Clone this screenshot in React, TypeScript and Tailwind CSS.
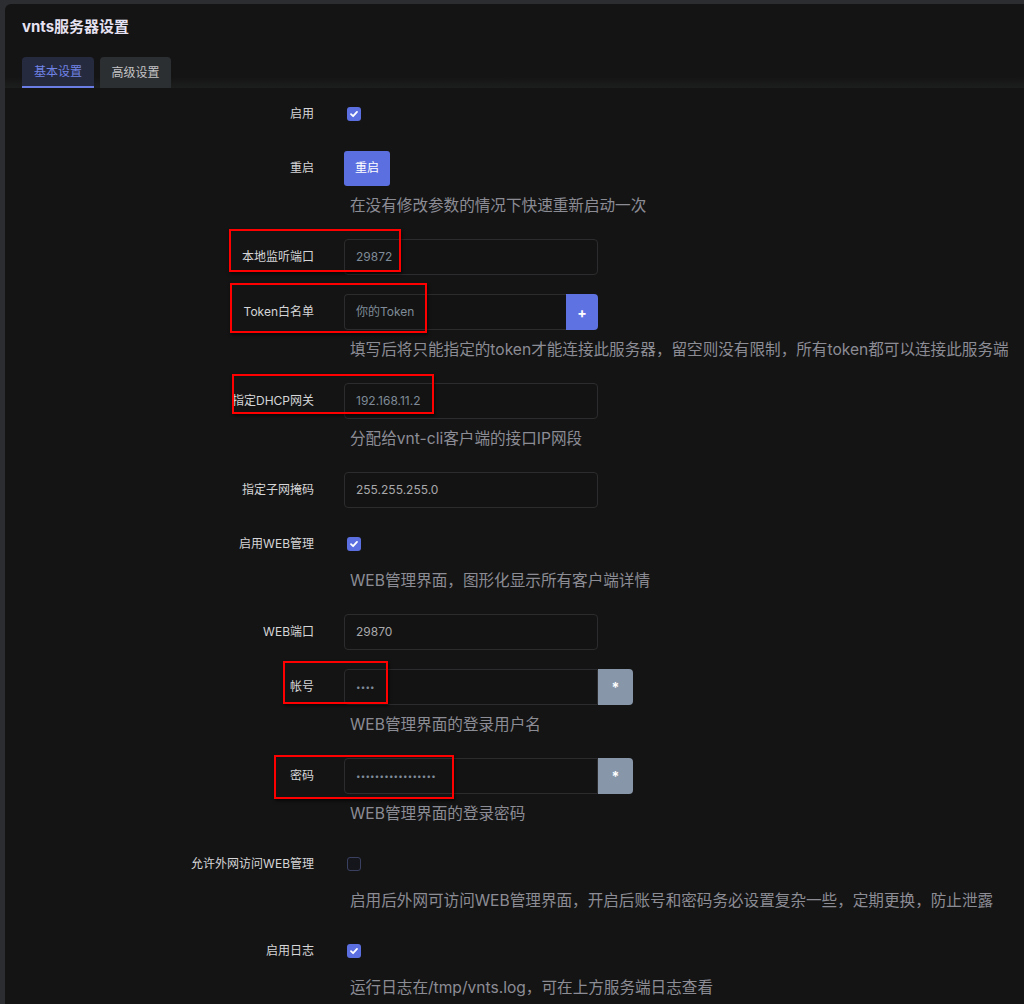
import React from 'react';

type Row = {
  label: string;
  kind: 'check' | 'button' | 'input' | 'inputAdd' | 'inputStar';
  value?: string;
  dim?: boolean;
  checked?: boolean;
  help?: string;
};

const rows: Row[] = [
  { label: '启用', kind: 'check', checked: true },
  { label: '重启', kind: 'button', help: '在没有修改参数的情况下快速重新启动一次' },
  { label: '本地监听端口', kind: 'input', value: '29872', dim: true },
  {
    label: 'Token白名单',
    kind: 'inputAdd',
    value: '你的Token',
    dim: true,
    help: '填写后将只能指定的token才能连接此服务器，留空则没有限制，所有token都可以连接此服务端',
  },
  { label: '指定DHCP网关', kind: 'input', value: '192.168.11.2', dim: true, help: '分配给vnt-cli客户端的接口IP网段' },
  { label: '指定子网掩码', kind: 'input', value: '255.255.255.0' },
  { label: '启用WEB管理', kind: 'check', checked: true, help: 'WEB管理界面，图形化显示所有客户端详情' },
  { label: 'WEB端口', kind: 'input', value: '29870' },
  { label: '帐号', kind: 'inputStar', value: '••••', dim: true, help: 'WEB管理界面的登录用户名' },
  { label: '密码', kind: 'inputStar', value: '•••••••••••••••••', dim: true, help: 'WEB管理界面的登录密码' },
  {
    label: '允许外网访问WEB管理',
    kind: 'check',
    checked: false,
    help: '启用后外网可访问WEB管理界面，开启后账号和密码务必设置复杂一些，定期更换，防止泄露',
  },
  { label: '启用日志', kind: 'check', checked: true, help: '运行日志在/tmp/vnts.log，可在上方服务端日志查看' },
];

// red annotation boxes drawn over the screenshot
const marks = [
  { l: 229, t: 229, w: 172, h: 43 },
  { l: 230, t: 283, w: 197, h: 50 },
  { l: 232, t: 374, w: 202, h: 40 },
  { l: 283, t: 661, w: 105, h: 43 },
  { l: 274, t: 755, w: 180, h: 44 },
];

function Checkbox({ checked }: { checked?: boolean }) {
  if (!checked) {
    return <span className="block w-[14px] h-[14px] rounded-[3px] border border-[#3a4160] bg-[#15161c]" />;
  }
  return (
    <span className="flex w-[14px] h-[14px] rounded-[3px] bg-[#5c6fe0] items-center justify-center">
      <svg width="10" height="10" viewBox="0 0 10 10">
        <path d="M2 5.2 L4.1 7.2 L8 2.9" fill="none" stroke="#fff" strokeWidth="1.8" strokeLinecap="round" strokeLinejoin="round" />
      </svg>
    </span>
  );
}

function TextBox({ value, dim, secret, className }: { value?: string; dim?: boolean; secret?: boolean; className: string }) {
  return (
    <div
      className={`h-[36px] border border-[#2c2c2e] bg-[#131313] flex items-center px-[11px] ${
        secret ? 'text-[8px] tracking-[0.2px]' : 'text-[12px]'
      } ${dim ? 'text-[#7f8b98]' : 'text-[#a9a9ab]'} ${className}`}
    >
      {value}
    </div>
  );
}

function Control({ row }: { row: Row }) {
  switch (row.kind) {
    case 'check':
      return (
        <div className="h-[34px] flex items-center pl-[3px]">
          <Checkbox checked={row.checked} />
        </div>
      );
    case 'button':
      return (
        <div className="h-[36px] flex items-center">
          <button className="w-[46px] h-[35px] rounded-[3px] bg-[#5c6fe0] text-white text-[12px]">重启</button>
        </div>
      );
    case 'input':
      return <TextBox value={row.value} dim={row.dim} className="w-[254px] rounded-[4px]" />;
    case 'inputAdd':
      return (
        <div className="flex">
          <TextBox value={row.value} dim={row.dim} className="w-[222px] rounded-l-[4px] border-r-0" />
          <div className="w-[32px] h-[36px] bg-[#5f72e2] rounded-r-[4px] flex items-center justify-center text-white text-[14px] font-bold">
            +
          </div>
        </div>
      );
    case 'inputStar':
      return (
        <div className="flex">
          <TextBox value={row.value} dim={row.dim} secret className="w-[254px] rounded-l-[4px]" />
          <div className="w-[35px] h-[36px] bg-[#8896a9] rounded-r-[4px] flex items-center justify-center text-white text-[14px] font-bold">
            *
          </div>
        </div>
      );
  }
}

export default function App() {
  return (
    <div
      className="relative w-[1024px] h-[1004px] overflow-hidden bg-[#2b2d31] pt-[4px] pl-[5px]"
      style={{ fontFamily: 'Inter, "Noto Sans CJK SC", sans-serif' }}
    >
      <div className="h-full bg-[#141414] rounded-tl-[6px]">
        <h1 className="pl-[17px] pt-[14px] text-[15px] leading-[18px] font-bold text-[#e6e2f2]">vnts服务器设置</h1>

        <div className="mt-[21px] flex gap-[6px] pl-[17px] bg-[linear-gradient(to_bottom,transparent_65%,#1c1e1d)]">
          <div className="w-[72px] h-[31px] rounded-t-[4px] bg-[#262a3e] border-b-2 border-[#6a7ce6] flex items-center justify-center text-[12px] text-[#7083e6]">
            基本设置
          </div>
          <div className="w-[71px] h-[31px] rounded-t-[4px] bg-[#2c2f32] flex items-center justify-center text-[12px] text-[#c4c4c6]">
            高级设置
          </div>
        </div>

        <div className="pt-[9px]">
          {rows.map((row) => (
            <div key={row.label} className={row.help ? 'mb-[22px]' : 'mb-[19px]'}>
              <div className="flex items-center">
                <div className="w-[309px] text-right text-[12px] text-[#d6d6d8] whitespace-nowrap">{row.label}</div>
                <div className="ml-[30px]">
                  <Control row={row} />
                </div>
              </div>
              {row.help && (
                <div className="ml-[345px] mt-[9px] text-[15.6px] leading-[22px] text-[#8c8c95] whitespace-nowrap">
                  {row.help}
                </div>
              )}
            </div>
          ))}
        </div>
      </div>

      {marks.map((m, i) => (
        <div
          key={i}
          className="absolute border-2 border-[#ff0000] shadow-[1px_2px_3px_rgba(0,0,0,0.6)]"
          style={{ left: m.l, top: m.t, width: m.w, height: m.h }}
        />
      ))}
    </div>
  );
}
